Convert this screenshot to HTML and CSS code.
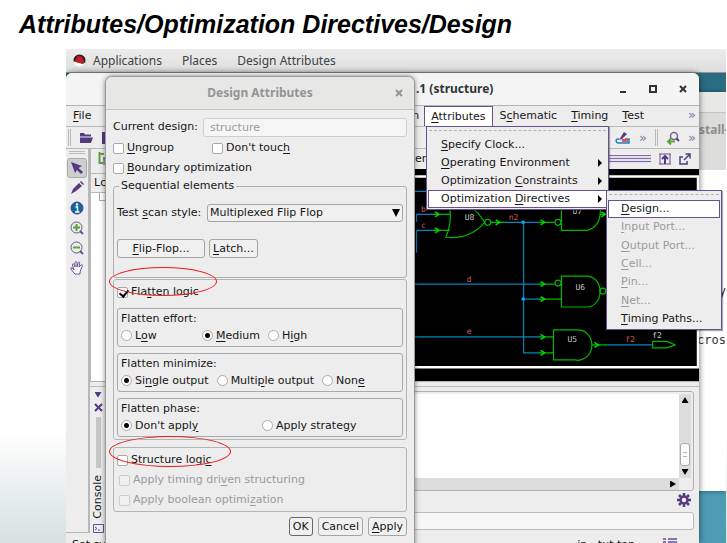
FILE: index.html
```html
<!DOCTYPE html>
<html lang="en">
<head>
<meta charset="utf-8">
<title>Attributes/Optimization Directives/Design</title>
<link rel="stylesheet" href="styles.css">
</head>
<body>
<h1>Attributes/Optimization Directives/Design</h1>
<div class="desktop">
  <nav class="topbar">
    <svg class="hat" width="13" height="13" viewBox="0 0 13 13"><circle cx="6.500" cy="6.500" r="6" fill="#fff"/><path d="M0.600 7.500A6 6 0 1 1 12.400 7.500C12 9.500 10 10 8 9.500L4 8Z" fill="#222"/><path d="M1 6.500C2 6 2.500 6 3 5.500L4 2.500C5 1.500 6 2.500 7 2.300C9 2 10 4 10.300 6C12.500 7.500 11.500 9.500 9 9C6 9 2 8.500 1 6.500Z" fill="#c91a22"/></svg>
    <a href="#">Applications</a><a href="#">Places</a><a href="#">Design Attributes</a>
  </nav>

  <section class="terminal">
    <header></header>
    <div class="tabs">stall-</div>
    <pre>y</pre><pre>cros</pre>
  </section>

  <section class="main-window">
    <header class="main-title">
      <span class="main-name">.1 (structure)</span>
      <span class="window-buttons">
        <button aria-label="Minimize"><svg width="8" height="10" viewBox="0 0 8 10"><path d="M1 8H7" stroke="#2e3436" stroke-width="2"/></svg></button>
        <button aria-label="Maximize"><svg width="8" height="10" viewBox="0 0 8 10"><path d="M1 2H7V8H1Z" fill="none" stroke="#2e3436" stroke-width="2"/></svg></button>
        <button aria-label="Close"><svg width="8" height="10" viewBox="0 0 8 10"><path d="M1 2L7 8M7 2L1 8" stroke="#2e3436" stroke-width="2"/></svg></button>
      </span>
    </header>
    <div class="menubar">
      <button><u>F</u>ile</button><button><u>E</u>dit</button>
      <span class="menubar-right"><span class="clip">n</span>
        <button class="open"><u>A</u>ttributes</button><button>S<u>c</u>hematic</button><button><u>T</u>iming</button><button><u>T</u>est</button>
      </span>
      <span class="more">»</span>
    </div>
    <div class="toolbar">
      <i class="grip"></i>
      <svg width="14" height="12" viewBox="0 0 14 12"><path d="M1 11V1H5L6 2.500H12V4.500H1Z M1 5.500H14L12 11H1Z" fill="#553a80"/></svg>
      <svg width="14" height="14" viewBox="0 0 14 14"><path d="M1 1H11L13 3V13H1Z" fill="#553a80"/><path d="M4 1V5H9V1M4 13V8H10V13" fill="#ddd"/></svg>
      <span class="toolbar-right">
        <svg width="16" height="14" viewBox="0 0 16 14"><path d="M4 8H3C0 8 1 12 3 12H14V8H10" fill="none" stroke="#1a80bd" stroke-width="1.500"/><rect x="7" y="8" width="6" height="3" fill="#d95757"/><path d="M4 9L9 1L12 3L7 8Z" fill="#553a80"/></svg>
        <span class="more">»</span><i class="grip"></i>
        <svg width="14" height="14" viewBox="0 0 14 14"><circle cx="8" cy="5" r="3.500" fill="#eee" stroke="#77669e" stroke-width="1.500"/><path d="M10.500 7.500L13 10" stroke="#553a80" stroke-width="2"/><path d="M9 10.500H2M5 7.500L2 10.500L5 13.500" fill="none" stroke="#5da13b" stroke-width="2"/></svg>
        <span class="more">»</span>
      </span>
    </div>
    <div class="workspace">
      <div class="tools">
        <i></i>
        <button class="active" aria-label="Select"><svg width="14" height="14" viewBox="0 0 14 14"><path d="M1 1L12 5L8.500 7L13 11L11 13L7 9L5 12Z" fill="#553a80"/></svg></button>
        <button aria-label="Edit"><svg width="14" height="14" viewBox="0 0 14 14"><path d="M1 13L3 8L9 2L12 5L6 10Z" fill="#553a80"/><path d="M10 1L11 0L14 3L13 4Z" fill="#553a80"/></svg></button>
        <button aria-label="Info"><svg width="14" height="14" viewBox="0 0 14 14"><circle cx="7" cy="7" r="6" fill="#0868a8" stroke="#553a80"/><circle cx="7" cy="3.500" r="1.200" fill="#fff"/><path d="M5.500 6H7.500V11M5 11H9.500" fill="none" stroke="#fff" stroke-width="1.500"/></svg></button>
        <button aria-label="Zoom in"><svg width="14" height="14" viewBox="0 0 14 14"><circle cx="6.500" cy="6.500" r="5.500" fill="#eee" stroke="#66508d"/><path d="M10 10L13 13" stroke="#66508d" stroke-width="2"/><path d="M3 6.500H10M6.500 3V10" stroke="#5da13b" stroke-width="2"/></svg></button>
        <button aria-label="Zoom out"><svg width="14" height="14" viewBox="0 0 14 14"><circle cx="6.500" cy="6.500" r="5.500" fill="#eee" stroke="#66508d"/><path d="M10 10L13 13" stroke="#66508d" stroke-width="2"/><path d="M3 6.500H10" stroke="#5da13b" stroke-width="2"/></svg></button>
        <button aria-label="Pan"><svg width="14" height="14" viewBox="0 0 14 14"><path d="M4 12L1 8C0 6 2 6 4 9L2.500 4C2.500 2 4 2 5 6L5 2C5 0 7 0 7 2V6L8 2C9 0 10 1 9.500 3L9 6L11 4C13 3 12.500 5 11.500 7L10 11V13H5Z" fill="#fff" stroke="#66508d"/></svg></button>
      </div>
      <div class="area">
        <div class="upper">
          <div class="tree">
            <div class="tree-tab"><svg width="9" height="14" viewBox="0 0 9 14"><path d="M1.500 0V11H5M1.500 2H6" fill="none" stroke="#5da13b" stroke-width="2"/><path d="M5 6H9M6 6V13" fill="none" stroke="#553a80"/></svg></div>
            <div class="tree-head">Lc</div>
            <div class="tree-body"><i></i></div>
          </div>
          <div class="view">
            <div class="view-bar"><span>er</span><i class="lines"></i>
              <svg width="12" height="12" viewBox="0 0 12 12"><path d="M0 1H12M0 11H12M1 1V11M11 1V11" stroke="#66508d"/><path d="M6 11V4M3 6L6 3L9 6" fill="none" stroke="#553a80" stroke-width="2"/></svg>
              <svg width="12" height="12" viewBox="0 0 12 12"><path d="M4 4H1V11H8V8M5 7L10 2M6.500 1H11V5.500" fill="none" stroke="#553a80" stroke-width="1.500"/></svg>
            </div>
            <svg class="circuit" viewBox="415 168 285 213" preserveAspectRatio="xMinYMin slice">
              <path fill="#000" d="M415 168H700V381H415Z"/>
              <path d="M415 175.500H699V367H415" fill="none" stroke="#fff" stroke-width="2.500"/>
              <g fill="none" stroke="#0784bb" stroke-width="1.200">
                <path d="M415 190.500H430M416.500 221V213.500H438M416.500 252V229.500H438M500 221.500H540M524 221.500V352.500H541M415 283.500H541M524 298.500H541M415 336.500H541M606 344.500H653"/>
              </g>
              <g fill="none" stroke="#00b800" stroke-width="1.200">
                <path d="M434 213.500H450M434 229.500H450M446 190Q455 215 446 236.500Q470 239 485 221.500Q470 198 450 200"/>
                <circle cx="488" cy="221.500" r="3"/><path d="M491 221.500H505M540 221.500H555"/><circle cx="558.500" cy="221.500" r="3"/>
                <path d="M562 195V229.500H588Q601 226 601 210V195M601 213.500H606"/>
                <path d="M540 283.500H555M540 298.500H562M562 275.500H588C605 277 605 305 588 306.500H562Z"/><circle cx="558.500" cy="282.500" r="3"/><circle cx="603.500" cy="290.500" r="3"/>
                <path d="M540 336.500H554M540 352.500H554M554 329.500H579C597 331 597 358 579 360L575 359.500H554Z M593 344.500H607"/>
                <path d="M653.500 341V347.500H668L676 344.500L668 341Z"/>
              </g>
              <g fill="none" stroke="#00d800" stroke-width="1.500">
                <path d="M435 211L439 213.500L435 216M435 227L439 229.500L435 232M496 219L500 221.500L496 224M541 219L545 221.500L541 224M541 281L545 283.500L541 286M541 296L545 298.500L541 301M541 334L545 336.500L541 339M541 350L545 352.500L541 355M595 342L599 344.500L595 347M602 211L606 213.500L602 216"/>
              </g>
              <path fill="#12aaff" d="M522 220h3v3h-3zM522 297h3v3h-3z"/>
              <g class="gate-text"><text x="465" y="219">U8</text><text x="573" y="213">U7</text><text x="576" y="289">U6</text><text x="568" y="342">U5</text><text x="653" y="338">f2</text></g>
              <g class="net-text"><text x="421" y="211">b</text><text x="421" y="227">c</text><text x="509" y="219">n2</text><text x="467" y="281">d</text><text x="467" y="334">e</text><text x="626" y="342">f2</text></g>
            </svg>
          </div>
        </div>
        <div class="lower">
          <div class="console-tab"><i class="down"></i><svg width="9" height="9" viewBox="0 0 9 9"><path d="M1 1L8 8M8 1L1 8" stroke="#553a80" stroke-width="2"/></svg><i class="bar"></i><span>Console</span><svg width="11" height="9" viewBox="0 0 11 9"><path d="M.5.5H10.500V8.500H.5Z" fill="#eee" stroke="#66508d"/><path d="M2 3L4 4.500L2 6M5 6H7" fill="none" stroke="#66508d"/></svg></div>
          <div class="console">
            <div class="log">
              <div class="log-text"></div>
              <div class="vscroll"><i class="up"></i><b></b><i class="down"></i></div>
              <div class="hscroll"><i class="right"></i></div>
            </div>
            <div class="gear"><svg width="14" height="14" viewBox="0 0 14 14"><circle cx="7" cy="7" r="3.500" fill="none" stroke="#553a80" stroke-width="2.500"/><path d="M7 0V3M7 11V14M0 7H3M11 7H14M2 2L4 4M10 10L12 12M12 2L10 4M4 10L2 12" stroke="#553a80" stroke-width="2.500"/></svg></div>
            <input type="text" aria-label="Command">
          </div>
        </div>
      </div>
    </div>
    <footer class="status"><span>Set sy</span><span class="status-right">in : tut  top</span><svg width="14" height="10" viewBox="0 0 14 10"><path d="M0 1H3M5 1H14M0 4H3M5 4H14M0 7H3M5 7H14" stroke="#8975ad" stroke-width="2"/></svg></footer>
  </section>

  <ul class="menu attributes-menu">
    <li><button><u>S</u>pecify Clock...</button></li>
    <li><button><u>O</u>perating Environment<i></i></button></li>
    <li><button>Optimization <u>C</u>onstraints<i></i></button></li>
    <li><button class="selected">Optimization <u>D</u>irectives<i></i></button></li>
  </ul>
  <ul class="menu directives-menu">
    <li><button class="selected"><u>D</u>esign...</button></li>
    <li><button disabled><u>I</u>nput Port...</button></li>
    <li><button disabled><u>O</u>utput Port...</button></li>
    <li><button disabled><u>C</u>ell...</button></li>
    <li><button disabled><u>P</u>in...</button></li>
    <li><button disabled><u>N</u>et...</button></li>
    <li><button><u>T</u>iming Paths...</button></li>
  </ul>

  <form class="dialog">
    <header><h2>Design Attributes</h2><button type="button" aria-label="Close"><svg width="8" height="8" viewBox="0 0 8 8"><path d="M1 1L7 7M7 1L1 7" stroke="#929595" stroke-width="2"/></svg></button></header>
    <div class="dialog-body">
      <div class="row current"><label for="cur">Current design:</label><input id="cur" type="text" value="structure" disabled></div>
      <div class="row two"><label><input type="checkbox"><span><u>U</u>ngroup</span></label><label><input type="checkbox"><span>Don't touc<u>h</u></span></label></div>
      <div class="row"><label><input type="checkbox"><span><u>B</u>oundary optimization</span></label></div>
      <fieldset class="sequential">
        <legend>Sequential elements</legend>
        <div class="scan"><label for="scan">Test <u>s</u>can style:</label><span class="select"><select id="scan"><option>Multiplexed Flip Flop</option></select><i></i></span></div>
        <div class="scan-buttons"><button type="button" class="wide"><u>F</u>lip-Flop...</button><button type="button"><u>L</u>atch...</button></div>
      </fieldset>
      <section class="group flatten">
        <label><input type="checkbox" checked><span>Fla<u>t</u>ten logic</span></label>
        <div class="box" role="radiogroup" aria-labelledby="effort"><p id="effort">Flatten effort:</p><div class="options effort"><label><input type="radio" name="effort"><span>L<u>o</u>w</span></label><label><input type="radio" name="effort" checked><span><u>M</u>edium</span></label><label><input type="radio" name="effort"><span>H<u>i</u>gh</span></label></div></div>
        <div class="box" role="radiogroup" aria-labelledby="min"><p id="min">Flatten minimize:</p><div class="options"><label><input type="radio" name="min" checked><span>Si<u>n</u>gle output</span></label><label><input type="radio" name="min"><span>Multi<u>p</u>le output</span></label><label><input type="radio" name="min"><span>Non<u>e</u></span></label></div></div>
        <div class="box" role="radiogroup" aria-labelledby="phase"><p id="phase">Flatten phase:</p><div class="options phase"><label><input type="radio" name="phase" checked><span>Don't appl<u>y</u></span></label><label><input type="radio" name="phase"><span>Apply strate<u>g</u>y</span></label></div></div>
      </section>
      <section class="group structure">
        <label><input type="checkbox"><span>Structure logi<u>c</u></span></label>
        <label class="off"><input type="checkbox" disabled><span>Apply timing dri<u>v</u>en structuring</span></label>
        <label class="off"><input type="checkbox" disabled><span>Apply boolean optimi<u>z</u>ation</span></label>
      </section>
      <div class="actions"><button type="button" class="default">OK</button><button type="button">Cancel</button><button type="button"><u>A</u>pply</button></div>
    </div>
    <i class="ring ring-flatten"></i><i class="ring ring-structure"></i>
  </form>
</div>
</body>
</html>
```
FILE: styles.css
```css
* { box-sizing: border-box; }
body {
  margin: 0;
  height: 100vh;
  overflow: hidden;
  display: flex;
  flex-direction: column;
  background: linear-gradient(#fff 80%, #f0f3f3 87%, #d6e1e1);
  font: 11px/16px "DejaVu Sans", sans-serif;
  color: #161616;
}
h1 {
  margin: 0;
  padding: 9px 0 0 19px;
  height: 49px;
  flex: none;
  font: italic bold 25px/30px "Liberation Sans", sans-serif;
  color: #000;
  white-space: nowrap;
}
button, input, select { font: inherit; color: inherit; margin: 0; }
button { background: none; border: 0; padding: 0; }
ul { list-style: none; margin: 0; padding: 0; }
u { text-underline-offset: 2px; }
svg { display: block; flex: none; }
i { font-style: normal; }

.desktop {
  flex: 1;
  position: relative;
  overflow: hidden;
  margin: 0 1px 0 66px;
  background: linear-gradient(#27697f, #4c9cb4 80%, #4c9cb4);
}
.topbar {
  display: flex;
  align-items: center;
  height: 24px;
  padding-left: 7px;
  background: linear-gradient(#ececec, #dedede);
  border-bottom: 1px solid #959595;
  font: 12px/16px "Noto Sans", sans-serif;
}
.topbar a { color: #3b4144; text-decoration: none; margin-right: 20px; }
.hat { margin-right: 7px; }

.terminal {
  position: absolute;
  top: 43px;
  right: 0;
  bottom: 52px;
  width: 60px;
  background: #fff;
  box-shadow: 0 0 5px #0006;
  font: 12px/16px "DejaVu Sans Mono", monospace;
}
.terminal header { height: 21px; background: #e8e8e7; border-bottom: 1px solid #c5c5c3; }
.tabs { height: 57px; padding: 9px 0 0 33px; background: #dcdcda; color: #8b8e8f; font: bold 12px/16px "Noto Sans", sans-serif; }
.terminal pre { margin: 113px 0 0 34px; font: inherit; color: #333; text-align: right; }
.terminal pre + pre { margin-top: 33px; text-align: left; margin-left: 31px; }

.main-window {
  position: absolute;
  inset: 24px 27px 0 0;
  display: flex;
  flex-direction: column;
  background: #ededed;
  border-radius: 6px 6px 0 0;
  box-shadow: 0 0 6px #0009;
}
.main-title {
  display: flex;
  align-items: center;
  justify-content: space-between;
  height: 33px;
  flex: none;
  padding: 0 12px 0 350px;
  background: #f4f4f4;
  border-bottom: 1px solid #b3b3b0;
  border-radius: 6px 6px 0 0;
  font: bold 12px/16px "Noto Sans", sans-serif;
  color: #2e3436;
}
.window-buttons { display: flex; gap: 22px; }
.menubar { display: flex; height: 21px; flex: none; align-items: stretch; border-bottom: 1px solid #b8b8b8; }
.menubar button { padding: 0 6px; border: 1px solid transparent; }
.menubar-right { display: flex; margin-left: auto; }
.clip { padding: 2px 5px 0 0; }
.menubar .open { background: #fff; border-color: #66508d; border-bottom: 0; }
.more { color: #8a74aa; font-size: 13px; }
.menubar .more { padding: 1px 3px 0 37px; }
.toolbar { display: flex; height: 22px; flex: none; align-items: center; gap: 8px; padding: 0 3px 0 2px; border-bottom: 1px solid #b8b8b8; }
.toolbar-right { display: flex; align-items: center; margin-left: auto; gap: 8px; }
.grip { width: 3px; height: 17px; border: solid #bbb; border-width: 0 1px; }
.workspace { flex: 1; display: flex; min-height: 0; }
.tools { width: 24px; display: flex; flex-direction: column; align-items: center; border: 1px solid #b8b8b8; border-width: 0 2px 1px 0; }
.tools > i { width: 16px; height: 3px; margin: 2px 0 4px; border: solid #bbb; border-width: 1px 0; }
.tools button { width: 20px; height: 20px; display: grid; place-items: center; flex: none; border: 1px solid transparent; border-radius: 3px; }
.tools .active { background: #cfcfcf; border-color: #aaa; }
.area { flex: 1; display: flex; flex-direction: column; min-width: 0; }
.upper { display: flex; height: 233px; flex: none; border-bottom: 1px solid #b0b0b0; }
.tree { width: 325px; flex: none; display: flex; flex-direction: column; border-left: 1px solid #b8b8b8; }
.tree-tab { height: 24px; padding: 3px 7px; }
.tree-head { height: 20px; padding: 1px 3px; border: solid #b8b8b8; border-width: 1px 0; }
.tree-body { flex: 1; background: #fff; padding-left: 8px; }
.tree-body i { display: block; width: 10px; height: 8px; border: solid #aaa; border-width: 0 0 1px 1px; }
.view { flex: 1; min-width: 0; }
.view-bar { display: flex; align-items: center; height: 20px; padding-right: 8px; gap: 8px; }
.lines { flex: 1; height: 8px; background: repeating-linear-gradient(#7f6ba6 0 1px, #e4deee 1px 3px); }
.circuit { width: 100%; height: 212px; }
.gate-text text { font: 8px "DejaVu Sans Mono", monospace; fill: #c8c8c8; }
.net-text text { font: 8px "DejaVu Sans Mono", monospace; fill: #c85c5c; }
.lower { flex: 1; display: flex; min-height: 0; padding-top: 4px; }
.console-tab { width: 16px; display: flex; flex-direction: column; align-items: center; gap: 5px; padding: 5px 0 0; border: solid #bbb; border-width: 1px 0 0; }
.console-tab .bar { width: 5px; height: 53px; margin-bottom: 2px; background: #c6c6c6; }
.console-tab span { writing-mode: vertical-rl; transform: rotate(180deg); }
.up, .down, .right { background: #000; width: 7px; height: 6px; clip-path: polygon(50% 0, 100% 100%, 0 100%); }
.down { clip-path: polygon(0 0, 100% 0, 50% 100%); }
.console-tab .down { background: #553a80; }
.right { width: 6px; height: 7px; clip-path: polygon(0 0, 100% 50%, 0 100%); }
.console { flex: 1; min-width: 0; display: flex; flex-direction: column; padding: 4px 5px 0 0; border-top: 1px solid #bbb; }
.log { display: grid; grid-template: 84px 12px / 1fr 12px; padding: 2px; height: 100px; flex: none; border: 1px solid #b0b0b0; border-radius: 3px; }
.log-text { background: #fff; }
.vscroll { display: flex; flex-direction: column; align-items: center; justify-content: space-between; padding: 3px 0; background: #dcdcdc; }
.vscroll b { width: 10px; height: 23px; margin-top: auto; margin-bottom: 3px; background: linear-gradient(#bbb, #bbb) center 8px / 4px 1px no-repeat, linear-gradient(#bbb, #bbb) center 12px / 4px 1px no-repeat, #fafafa; border: 1px solid #aaa; border-radius: 3px; }
.hscroll { display: flex; align-items: center; justify-content: flex-end; padding-right: 3px; background: #dcdcdc; }
.gear { display: flex; justify-content: flex-end; padding: 2px 3px 5px; }
.console input { width: 100%; height: 18px; flex: none; border: 1px solid #bbb; border-radius: 3px; background: #f7f7f7; }
.status { display: flex; height: 10px; flex: none; padding: 5px 22px 0 6px; line-height: 14px; }
.status-right { margin-left: auto; padding-right: 28px; }

.menu {
  position: absolute;
  display: grid;
  grid-auto-rows: 1fr;
  padding: 9px 1px 1px;
  background: #ededed;
  border: 1px solid #66508d;
  box-shadow: 1px 1px 1px #0005;
}
.menu::before { content: ""; position: absolute; inset: 3px 2px auto; border-top: 1px dashed #b5b5b5; }
.menu li { display: grid; }
.menu button { display: flex; align-items: center; padding: 0 4px 0 12px; border: 1px solid transparent; text-align: left; white-space: pre; }
.menu button:disabled { color: #9b9b9b; }
.menu .selected { background: #fff; border-color: #66508d; }
.menu i { margin-left: auto; border: 4px solid transparent; border-left-color: #000; border-right: 0; }
.attributes-menu { top: 77px; left: 360px; width: 183px; height: 84px; }
.directives-menu { top: 141px; left: 540px; width: 116px; height: 140px; }

.dialog {
  position: absolute;
  top: 27px;
  left: 39px;
  bottom: -20px;
  width: 310px;
  background: #ededed;
  border: 1px solid #999;
  border-radius: 7px;
  box-shadow: 0 0 5px #0007;
}
.dialog header { display: flex; align-items: center; height: 33px; padding: 0 11px 0 19px; background: #e7e7e5; border-bottom: 1px solid #c5c5c2; border-radius: 7px 7px 0 0; }
.dialog h2 { flex: 1; margin: 0; text-align: center; font: bold 12px/16px "Noto Sans", sans-serif; color: #929595; }
.dialog-body { padding: 7px 7px 0; }
.row { display: flex; align-items: center; height: 20px; }
.row.current { gap: 5px; margin-bottom: 1px; }
.current input { flex: 1; min-width: 0; height: 19px; padding: 0 6px; background: #f5f5f5; border: 1px solid #cfcfcf; border-radius: 3px; color: #9b9b9b; }
.two { display: grid; grid-template-columns: 99px 1fr; }
.dialog label { display: flex; align-items: center; white-space: pre; }
.dialog .current label, .scan label { display: block; }
.dialog label input { appearance: none; position: relative; width: 11px; height: 11px; flex: none; margin-right: 3px; background: #fff; border: 1px solid #aaa; border-radius: 2px; }
.dialog label input[type="radio"] { border-radius: 50%; }
.dialog label input[type="radio"]:checked { background: radial-gradient(circle, #000 0 2px, #fff 3px); }
.dialog label input[type="checkbox"]:checked::after { content: ""; position: absolute; top: 0; left: 3px; width: 4px; height: 7px; border: solid #000; border-width: 0 2px 2px 0; transform: rotate(40deg); }
.dialog .off { color: #9b9b9b; }
.dialog .off input { background: #f0f0f0; border-color: #ccc; }
.sequential { margin: 0; padding: 10px 3px 0; height: 100px; border: 1px solid #b0b0b0; border-radius: 3px; min-width: 0; }
.sequential legend { padding: 0 2px; margin-left: 2px; }
.scan { display: flex; align-items: center; gap: 5px; justify-content: space-between; }
.select { position: relative; width: 196px; }
.select select { appearance: none; display: block; width: 100%; height: 18px; padding: 0 2px; background: #f0f0f0; border: 1px solid #a5a5a5; border-radius: 3px; }
.select i { position: absolute; top: 5px; right: 3px; width: 8px; height: 8px; background: #000; clip-path: polygon(0 0, 100% 0, 50% 100%); pointer-events: none; }
.scan-buttons { display: flex; gap: 4px; margin-top: 17px; }
.dialog-body button { height: 19px; padding: 0 3px; border: 1px solid #a5a5a5; border-radius: 3px; background: #f0f0f0; }
.dialog-body .wide { width: 88px; }
.group { border: 1px solid #b5b5b5; border-radius: 3px; }
.flatten { margin-top: 1px; padding: 2px 3px; display: grid; gap: 6px; }
.flatten > label { height: 20px; }
.box { height: 39px; padding: 1px 3px; border: 1px solid #aaa; border-radius: 3px; }
.box p { margin: 0; line-height: 17px; }
.options { display: flex; gap: 8px; }
.options label { height: 17px; }
.effort { display: grid; grid-template-columns: 73px auto 1fr; }
.phase { display: grid; grid-template-columns: 141px 1fr; gap: 0; }
.structure { margin-top: 7px; padding: 2px 3px; height: 65px; }
.structure label { height: 20px; }
.structure .off { padding-left: 2px; }
.actions { display: flex; justify-content: flex-end; gap: 5px; margin-top: 5px; }
.actions .default { border-color: #666; }
.ring { position: absolute; border: 1px solid #e81c1c; border-radius: 50%; pointer-events: none; }
.ring-flatten { top: 190px; left: 3px; width: 108px; height: 29px; }
.ring-structure { top: 359px; left: 3px; width: 122px; height: 31px; }
```
